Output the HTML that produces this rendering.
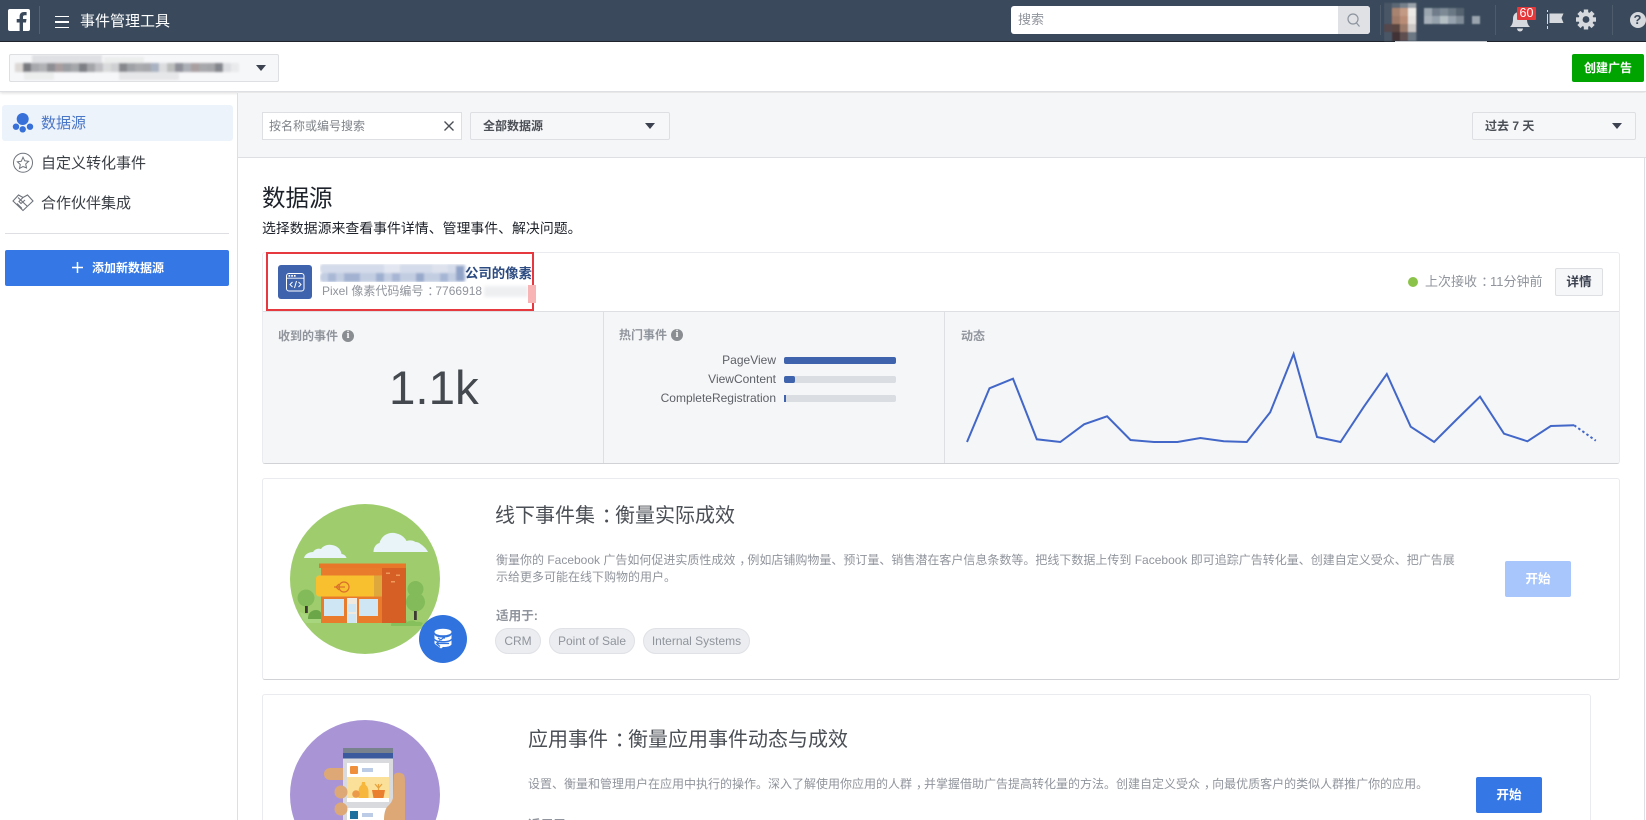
<!DOCTYPE html>
<html lang="zh"><head><meta charset="utf-8"><title>事件管理工具</title>
<style>
html,body{margin:0;padding:0;width:1646px;height:820px;overflow:hidden;background:#fff}
body{font-family:"Liberation Sans","Noto Sans CJK SC",sans-serif;color:#1d2129;font-size:12.6px}
#p{position:absolute;left:0;top:0;width:1646px;height:820px;overflow:hidden;background:#fff;filter:blur(.3px)}
.a{position:absolute;box-sizing:border-box}
.t{position:absolute;white-space:nowrap;line-height:18px;margin-top:-9px}
.dd{background:#f6f7f9;border:1px solid #dddfe2;border-radius:2px}
.car{position:absolute;width:0;height:0;border-left:5.500px solid transparent;border-right:5.500px solid transparent;border-top:6px solid #3c4250}
.pill{position:absolute;top:628px;height:26px;line-height:24px;border:1px solid #dfe1e6;background:#ebedf0;border-radius:13px;color:#90949c;font-size:12px;text-align:center;box-sizing:border-box}
.g{color:#90949c}
.b{font-weight:bold}
.c{position:relative;left:.33em}
.i{position:absolute;width:12px;height:12px;border-radius:50%;background:#8a8d91;color:#fff;font:bold 10px/12px "Liberation Serif",serif;text-align:center}
</style></head><body><div id="p">

<!-- top bar -->
<div class="a" style="left:0;top:0;width:1646px;height:42px;background:#3a4a5c;border-bottom:1px solid #20262e"></div>
<div class="a" style="left:8px;top:9px;width:22px;height:22px;background:#fff;border-radius:2px"></div>
<svg class="a" style="left:8px;top:9px" width="22" height="22"><path d="M15 22V13.500h3l.5-3.500H15V8c0-1.100.4-1.800 1.900-1.800h1.700V3.100C18.200 3 17.200 3 16 3c-2.600 0-4.400 1.600-4.400 4.500V10H8.700v3.500h2.900V22z" fill="#3a4a5c"/></svg>
<div class="a" style="left:39px;top:6px;width:1px;height:28px;background:#55626f"></div>
<div class="a" style="left:55px;top:16px;width:14px;height:12px;border-top:1.200px solid #fff;border-bottom:1.200px solid #fff"></div>
<div class="a" style="left:55px;top:21.400px;width:14px;height:1.200px;background:#fff"></div>
<div class="t" style="left:80px;top:22px;font-size:15px;color:#fff">事件管理工具</div>

<div class="a" style="left:1011px;top:6px;width:359px;height:28px;background:#fff;border-radius:3px;overflow:hidden">
  <div class="a" style="right:0;top:0;width:32px;height:28px;background:#dfe1e5"></div>
</div>
<div class="t" style="left:1018px;top:20px;font-size:13px;color:#90949c">搜索</div>
<svg class="a" style="left:1346px;top:12px" width="16" height="16" fill="none" stroke="#8d949e" stroke-width="1.200"><circle cx="7" cy="7" r="5"/><path d="M10.500 11l3 3.500"/></svg>
<div class="a" style="left:1380px;top:5px;width:1px;height:30px;background:#4d5b6a"></div>

<!-- avatar + blurred name -->
<svg class="a" style="left:1384px;top:0" width="115" height="48">
  <defs><filter id="b1" x="-5%" y="-5%" width="110%" height="110%"><feGaussianBlur stdDeviation=".9"/></filter></defs>
  <g filter="url(#b1)">
    <rect x="0" y="3" width="33" height="38" fill="#4a5766"/>
    <rect x="8" y="3" width="8" height="5" fill="#5c6875"/><rect x="16" y="3" width="8" height="5" fill="#76808b"/><rect x="24" y="3" width="8" height="5" fill="#9aa2aa"/>
    <rect x="8" y="8" width="8" height="8" fill="#a7836f"/><rect x="16" y="8" width="8" height="8" fill="#c39a83"/><rect x="24" y="8" width="8" height="8" fill="#ece9e6"/>
    <rect x="8" y="16" width="8" height="8" fill="#a07a68"/><rect x="16" y="16" width="8" height="8" fill="#b98c76"/><rect x="24" y="16" width="8" height="8" fill="#e6e2df"/>
    <rect x="0" y="24" width="8" height="8" fill="#54474c"/><rect x="8" y="24" width="8" height="8" fill="#5a4540"/><rect x="16" y="24" width="8" height="8" fill="#9c7a6a"/><rect x="24" y="24" width="8" height="8" fill="#ccc8c6"/>
    <rect x="8" y="32" width="8" height="9" fill="#3f3134"/><rect x="16" y="32" width="8" height="9" fill="#5e5051"/><rect x="24" y="32" width="8" height="9" fill="#6c7884"/>
    <rect x="40" y="8" width="8" height="8" fill="#9aa5af"/><rect x="48" y="8" width="8" height="8" fill="#6f7c89"/><rect x="56" y="8" width="8" height="8" fill="#7d8a96"/><rect x="64" y="8" width="8" height="8" fill="#6a7885"/><rect x="72" y="8" width="8" height="8" fill="#54626f"/>
    <rect x="40" y="16" width="8" height="8" fill="#a7b0b9"/><rect x="48" y="16" width="8" height="8" fill="#95a1ac"/><rect x="56" y="16" width="8" height="8" fill="#b4bfc4"/><rect x="64" y="16" width="8" height="8" fill="#96a2ad"/><rect x="72" y="16" width="8" height="8" fill="#7f8b96"/>
    <rect x="88" y="16" width="8" height="8" fill="#9aa4ae"/>
  </g>
</svg>
<svg class="a" style="left:1395px;top:41px" width="93" height="6"><path d="M0 0H92V1.500L90 1H50C40 5.500 22 5.500 10 1H0z" fill="#c9cdd1"/></svg>

<div class="a" style="left:1495px;top:5px;width:1px;height:30px;background:#4d5b6a"></div>
<svg class="a" style="left:1509px;top:8px" width="24" height="24"><path d="M11 2a2 2 0 0 1 2 2c4 1 5 4 5 7 0 4 1 6 3 8H1c2-2 3-4 3-8 0-3 1-6 5-7a2 2 0 0 1 2-2z" fill="#d6d9dd"/><path d="M8 20.500h6a3 3 0 0 1-6 0z" fill="#d6d9dd"/></svg>
<div class="a" style="left:1517px;top:7px;width:19px;height:13px;background:#e5383b;color:#fff;font-size:12.500px;line-height:13px;text-align:center;border-radius:1px">60</div>
<svg class="a" style="left:1545px;top:9px" width="20" height="22"><path d="M2.500 1v2M2.500 5v10M2.500 17v3" stroke="#d6d9dd" stroke-width="1"/><path d="M4.500 4.500h14l-2 4.500 2 5h-14z" fill="#d6d9dd"/></svg>
<svg class="a" style="left:1575px;top:9px" width="22" height="22"><g transform="translate(11 10.500)" fill="#d6d9dd"><circle r="7.500"/><rect x="-2.200" y="-10" width="4.400" height="20"/><rect x="-2.200" y="-10" width="4.400" height="20" transform="rotate(45)"/><rect x="-2.200" y="-10" width="4.400" height="20" transform="rotate(90)"/><rect x="-2.200" y="-10" width="4.400" height="20" transform="rotate(135)"/><circle r="3.400" fill="#3a4a5c"/></g></svg>
<div class="a" style="left:1612px;top:5px;width:1px;height:30px;background:#4d5b6a"></div>
<div class="a" style="left:1629.500px;top:12px;width:16px;height:16px;border-radius:50%;background:#d6d9dd;color:#3a4a5c;font:bold 13px/16px 'Liberation Sans',sans-serif;text-align:center">?</div>

<!-- sub header -->
<div class="a" style="left:0;top:42px;width:1646px;height:50px;background:#fff;border-bottom:1px solid #dddfe2;box-shadow:0 1px 3px rgba(0,0,0,.15)"></div>
<div class="a dd" style="left:9px;top:54px;width:270px;height:28px"></div>
<svg class="a" style="left:9px;top:54px" width="250" height="28"><defs><filter id="b3" x="-2%" y="-10%" width="104%" height="120%"><feGaussianBlur stdDeviation="1"/></filter></defs>
 <g filter="url(#b3)">
  <rect x="23" y="1" width="70" height="8" fill="#dfe0e3"/><rect x="95" y="3" width="40" height="6" fill="#eceded"/>
  <rect x="15" y="18" width="30" height="8" fill="#eceded"/><rect x="110" y="18" width="60" height="8" fill="#e6e7e9"/>
  <rect x="6" y="9" width="8" height="9" fill="#dcd8d5"/><rect x="14" y="9" width="8" height="9" fill="#77797f"/><rect x="22" y="9" width="8" height="9" fill="#a7a9ad"/><rect x="30" y="9" width="8" height="9" fill="#b0b2b5"/><rect x="38" y="9" width="8" height="9" fill="#8c8e93"/><rect x="46" y="9" width="8" height="9" fill="#a89ea0"/><rect x="54" y="9" width="8" height="9" fill="#9a9da1"/><rect x="62" y="9" width="8" height="9" fill="#a5a7ab"/><rect x="70" y="9" width="8" height="9" fill="#7d7f85"/><rect x="78" y="9" width="8" height="9" fill="#a3a5a9"/><rect x="86" y="9" width="8" height="9" fill="#bfc0c3"/><rect x="94" y="9" width="8" height="9" fill="#dadbdc"/><rect x="102" y="9" width="8" height="9" fill="#cfd0d2"/><rect x="110" y="9" width="8" height="9" fill="#85878d"/><rect x="118" y="9" width="8" height="9" fill="#9fa1a6"/><rect x="126" y="9" width="8" height="9" fill="#a9abaf"/><rect x="134" y="9" width="8" height="9" fill="#a5a7ac"/><rect x="142" y="9" width="8" height="9" fill="#a9b2c2"/><rect x="150" y="9" width="8" height="9" fill="#dcdddf"/><rect x="158" y="9" width="8" height="9" fill="#bcbdbd"/><rect x="166" y="9" width="8" height="9" fill="#8e8f99"/><rect x="174" y="9" width="8" height="9" fill="#acafb5"/><rect x="182" y="9" width="8" height="9" fill="#a99fa1"/><rect x="190" y="9" width="8" height="9" fill="#a7a8ac"/><rect x="198" y="9" width="8" height="9" fill="#a4a5a9"/><rect x="206" y="9" width="8" height="9" fill="#84868d"/><rect x="214" y="9" width="8" height="9" fill="#dddee1"/><rect x="222" y="9" width="8" height="9" fill="#e9eaec"/>
 </g></svg>
<div class="car" style="left:256px;top:65px"></div>
<div class="a" style="left:1572px;top:54px;width:72px;height:28px;background:#00a400;border-radius:2px;color:#fff;font-size:12px;font-weight:bold;line-height:28px;text-align:center">创建广告</div>

<!-- sidebar -->
<div class="a" style="left:237px;top:93px;width:1px;height:727px;background:#dddfe2"></div>
<div class="a" style="left:2px;top:105px;width:231px;height:36px;background:#edf3fb;border-radius:3px"></div>
<svg class="a" style="left:12px;top:111px" width="22" height="24" fill="#3670d8"><circle cx="10.700" cy="8" r="6"/><circle cx="4" cy="15.700" r="3.200"/><circle cx="10.700" cy="18.300" r="3.200"/><circle cx="18" cy="15.700" r="3.200"/></svg>
<div class="t" style="left:41px;top:123.500px;font-size:15px;color:#4a76c7">数据源</div>
<svg class="a" style="left:12px;top:152px" width="22" height="22" fill="none" stroke="#6f747c" stroke-width="1"><circle cx="11" cy="10.700" r="9.500"/><path d="M11 5.200l1.700 3.600 3.900.5-2.900 2.700.8 3.900L11 14.500l-3.500 1.900.8-3.900-2.900-2.700 3.900-.5z"/></svg>
<div class="t" style="left:41px;top:164px;font-size:15px;color:#3a3e45">自定义转化事件</div>
<svg class="a" style="left:12px;top:193px" width="22" height="20" fill="none" stroke="#6f747c" stroke-width="1.100"><path d="M1 8l5.500-6 4.500 2.500L15.500 2 21 8l-10 9.500z"/><path d="M6 4.500l9.500 9M11 4.500L7 8.500l2 2 4-3.500M5 10.500l5 5"/></svg>
<div class="t" style="left:41px;top:203.500px;font-size:15px;color:#3a3e45">合作伙伴集成</div>
<div class="a" style="left:5px;top:233px;width:224px;height:1px;background:#dddfe2"></div>
<div class="a" style="left:5px;top:250px;width:224px;height:36px;background:#3578e5;border-radius:2px"></div>
<svg class="a" style="left:71px;top:261px" width="13" height="13"><path d="M6.500 1v11M1 6.500h11" stroke="#fff" stroke-width="1.500"/></svg>
<div class="t" style="left:92px;top:268px;font-size:12px;font-weight:bold;color:#fff">添加新数据源</div>

<!-- filter bar -->
<div class="a" style="left:238px;top:93px;width:1408px;height:65px;background:#f5f6f7;border-bottom:1px solid #dddfe2"></div>
<div class="a" style="left:262px;top:112px;width:200px;height:28px;background:#fff;border:1px solid #dddfe2"></div>
<div class="t" style="left:269px;top:126px;font-size:12px;color:#7f8389">按名称或编号搜索</div>
<svg class="a" style="left:443px;top:120px" width="12" height="12"><path d="M1.500 1.500l9 9M10.500 1.500l-9 9" stroke="#4b4f56" stroke-width="1.400"/></svg>
<div class="a dd" style="left:470px;top:112px;width:200px;height:28px"></div>
<div class="t b" style="left:483px;top:126px;font-size:12px;color:#4b4f56">全部数据源</div>
<div class="car" style="left:645px;top:122.500px"></div>
<div class="a dd" style="left:1472px;top:112px;width:164px;height:28px"></div>
<div class="t b" style="left:1485px;top:126px;font-size:12px;color:#4b4f56">过去 7 天</div>
<div class="car" style="left:1611.500px;top:123px"></div>

<div class="a" style="left:1644px;top:158px;width:1px;height:662px;background:#dddfe2"></div>

<!-- heading -->
<div class="t" style="left:262px;top:197.500px;font-size:23.500px;line-height:30px;margin-top:-15px;color:#1d2129">数据源</div>
<div class="t" style="left:262px;top:228px;font-size:13.900px;color:#1d2129">选择数据源来查看事件详情、管理事件、解决问题。</div>

<!-- pixel card -->
<div class="a" style="left:262px;top:252px;width:1358px;height:212px;background:#fff;border:1px solid #e9ebee;border-bottom:1px solid #d0d2d6;border-radius:3px;overflow:hidden">
  <div class="a" style="left:0;top:58px;width:1356px;height:152px;background:#f5f6f7;border-top:1px solid #dddfe2"></div>
</div>
<div class="a" style="left:603px;top:311px;width:1px;height:152px;background:#dddfe2"></div>
<div class="a" style="left:944px;top:311px;width:1px;height:152px;background:#dddfe2"></div>

<div class="a" style="left:278px;top:265px;width:34px;height:34px;background:#3f63ad;border-radius:3px"></div>
<svg class="a" style="left:285px;top:272px" width="21" height="21" fill="none" stroke="#fff"><rect x="1.500" y="1.500" width="17.500" height="17.500" rx="2.500" stroke-width="1"/><path d="M2 6.200h17" stroke-width=".8"/><g fill="#fff" stroke="none"><rect x="3.500" y="3" width="1.700" height="1.700"/><rect x="6.200" y="3" width="1.700" height="1.700"/><rect x="8.900" y="3" width="1.700" height="1.700"/></g><path d="M7.500 10L5 12.500 7.500 15M13.500 10l2.500 2.500-2.500 2.500M11.500 9l-2 7" stroke-width="1"/></svg>

<svg class="a" style="left:320px;top:264px" width="148" height="18"><defs><filter id="b2" x="-3%" y="-15%" width="106%" height="130%"><feGaussianBlur stdDeviation="1"/></filter></defs><g filter="url(#b2)">
 <rect x="0" y="0" width="146" height="9" rx="3" fill="#d4dbea"/><rect x="0" y="9" width="146" height="9" rx="3" fill="#c2cde2"/>
 <rect x="8" y="9" width="8" height="9" fill="#a9b8d5"/><rect x="24" y="9" width="16" height="9" fill="#a3b2d1"/><rect x="56" y="9" width="8" height="9" fill="#9eafcf"/><rect x="72" y="9" width="8" height="9" fill="#a7b6d4"/><rect x="96" y="9" width="8" height="9" fill="#98a9cb"/><rect x="120" y="9" width="8" height="9" fill="#a5b5d4"/><rect x="136" y="2" width="8" height="15" fill="#90a3c7"/><rect x="64" y="0" width="16" height="9" fill="#e2e6f0"/><rect x="112" y="0" width="16" height="9" fill="#dde2ed"/></g></svg>
<div class="t b" style="left:465px;top:274px;font-size:13.400px;color:#2b4a80">公司的像素</div>
<div class="t g" style="left:322px;top:291px;font-size:12px">Pixel 像素代码编号<span class="c">：</span>7766918</div>
<div class="a" style="left:484px;top:286px;width:44px;height:11px;background:#eeeff1;filter:blur(1.500px)"></div>

<!-- red box -->
<div class="a" style="left:266px;top:251.500px;width:268px;height:59px;border:2.500px solid #e5383f"></div>
<div class="a" style="left:528px;top:285px;width:8px;height:18px;background:#f8b4b4"></div>

<div class="a" style="left:1408px;top:277px;width:10px;height:10px;border-radius:50%;background:#8bc34a"></div>
<div class="t g" style="left:1425px;top:282px;font-size:13px">上次接收<span class="c">：</span>11分钟前</div>
<div class="a dd" style="left:1555px;top:268px;width:48px;height:28px;color:#3c4250;font-size:12.600px;font-weight:bold;line-height:26px;text-align:center">详情</div>

<!-- stats -->
<div class="t b" style="left:278px;top:336px;font-size:12px;color:#90949c">收到的事件</div>
<div class="i" style="left:342px;top:330px">i</div>
<div class="t" style="left:389px;top:389px;font-size:47.500px;line-height:60px;margin-top:-30px;color:#444950">1.1k</div>

<div class="t b" style="left:619px;top:335px;font-size:12px;color:#90949c">热门事件</div>
<div class="i" style="left:671px;top:329px">i</div>
<div class="t" style="right:870px;top:360px;font-size:12px;color:#5d6067">PageView</div>
<div class="t" style="right:870px;top:379px;font-size:12px;color:#5d6067">ViewContent</div>
<div class="t" style="right:870px;top:398px;font-size:12px;color:#5d6067">CompleteRegistration</div>
<div class="a" style="left:784px;top:357px;width:112px;height:7px;background:#3f63ad;border-radius:2px"></div>
<div class="a" style="left:784px;top:376px;width:112px;height:7px;background:#dadde1;border-radius:2px"></div>
<div class="a" style="left:784px;top:376px;width:11px;height:7px;background:#3f63ad;border-radius:2px"></div>
<div class="a" style="left:784px;top:395px;width:112px;height:7px;background:#dadde1;border-radius:2px"></div>
<div class="a" style="left:784px;top:395px;width:2px;height:7px;background:#3f63ad"></div>

<div class="t b" style="left:961px;top:336px;font-size:12px;color:#90949c">动态</div>
<svg class="a" style="left:0;top:0;pointer-events:none" width="1646" height="820">
  <polyline fill="none" stroke="#4267c8" stroke-width="2" points="967,442 989.500,388.300 1013,378.700 1036.800,439.300 1060.300,442 1084.100,424.300 1107.100,416.300 1130.500,440 1154,442 1177.400,442 1200.400,438 1223.800,441.300 1246.800,442 1270.200,412.300 1293.600,354 1317,437 1340.500,442 1363.900,406.700 1386.800,374 1410.700,426.700 1434.100,442 1457.100,419 1480,396.700 1504,433.700 1527.400,441.300 1550.800,426 1574.200,425.300"/>
  <polyline fill="none" stroke="#4267c8" stroke-width="2" stroke-dasharray="2.500 2.500" points="1574.200,425.300 1595.800,440.700"/>
</svg>

<!-- offline card -->
<div class="a" style="left:262px;top:478px;width:1358px;height:202px;background:#fff;border:1px solid #e9ebee;border-bottom:1px solid #d0d2d6;border-radius:3px"></div>
<!-- app card -->
<div class="a" style="left:262px;top:694px;width:1329px;height:126px;border:1px solid #e9ebee;border-bottom:none;border-radius:3px 3px 0 0"></div>

<svg class="a" style="left:0;top:0" width="1646" height="820">
  <circle cx="365" cy="579" r="75" fill="#9fcd6e"/>
  <g fill="#e8f4f8">
    <path d="M304 558c1-4 5-6 9-6 2-3 5-4 8-3 2-3 6-5 11-4 6 1 9 5 9.500 9 2.500.3 4.500 2 5 4z"/>
    <path d="M373.500 552c0-4 2-8 6-9 2-7 8-11 15-10 6 1 10 4 12 8 3-1 6-1 9 1 2 0 4 1 5 2 3 2 6 5 7.500 8z"/>
  </g>
  <path d="M300 612c4 2 14 5 22 5v6h-16c-3-3-5-7-6-11z" fill="#a8d67e"/>
  <circle cx="306" cy="598" r="8.500" fill="#83bb5a"/><rect x="305" y="606" width="2.800" height="7" fill="#3c3a33"/>
  <path d="M308 618c0-5 4-8 8-8 4 0 6 3 6 7v2h-14z" fill="#6ba648"/>
  <circle cx="415.500" cy="589" r="8" fill="#83bb5a"/><circle cx="415.500" cy="602" r="9.500" fill="#83bb5a"/><rect x="414" y="611" width="2.800" height="9" fill="#3c3a33"/>
  <path d="M391 626c0-4 2-6 5-6 1-2 4-3 6-2 3 0 5 2 5 4 3-2 7-2 9 0 2-1 5 0 7 1l-2 3z" fill="#85c05c"/>
  <rect x="382" y="564" width="24" height="59" fill="#d55f25"/>
  <rect x="319" y="563.500" width="87" height="4.500" fill="#e9772a"/>
  <rect x="321" y="568" width="61" height="55" fill="#e87c2c"/>
  <path d="M319 575.500h63v21h-63a3 3 0 0 1-3-3v-15a3 3 0 0 1 3-3z" fill="#f8bf2f"/><rect x="374" y="575.500" width="8" height="21" fill="#dfa83c"/>
  <circle cx="344" cy="587" r="5" fill="none" stroke="#d8702a" stroke-width="1.200"/><path d="M334 587h11M339 584l-3 3 3 3" fill="none" stroke="#d8702a" stroke-width="1.200"/>
  <rect x="324" y="599" width="20" height="17" fill="#cfe7f5"/><rect x="359" y="599" width="19" height="17" fill="#cfe7f5"/>
  <rect x="347" y="598" width="10" height="25" fill="#f1e9de"/><rect x="348" y="604" width="8" height="8" fill="#cfe7f5"/><rect x="348" y="614" width="8" height="9" fill="#cfe7f5"/>
  <g fill="#f09a5a"><rect x="386" y="572.500" width="4" height="1.500"/><rect x="396" y="574.500" width="4" height="1.500"/><rect x="391" y="581" width="4" height="1.500"/></g>
  <circle cx="443" cy="639" r="24" fill="#3173de"/>
  <g fill="#fff"><ellipse cx="443" cy="632" rx="8.500" ry="3.300"/><path d="M434.500 634.500c1 2 3.500 3 8.500 3s7.500-1 8.500-3v4c-1 1.500-3.500 2.500-8.500 2.500s-7.500-1-8.500-2.500z"/><path d="M434.500 640.500c2 1.500 4.500 2 8.500 2s6.500-.5 8.500-2v4c-1 1.500-3.500 2.500-8.500 2.500l-2 1.500-4-3c-1-.8-2.500-1.500-2.500-2.500z"/></g>
  <path d="M449 643.500h-12M440 640.500l-3.500 3 3.500 3M438 638l3 2 2-2h2" fill="none" stroke="#3173de" stroke-width="1.200"/>

  <circle cx="365" cy="795" r="75" fill="#a995d6"/>
  <path d="M330 768h15v12h-15a6 6 0 0 1 0-12z" fill="#dda875"/>
  <rect x="343" y="748" width="50" height="72" fill="#d8dade"/>
  <rect x="343" y="748" width="50" height="5" fill="#78828f"/><rect x="343" y="753" width="50" height="5.500" fill="#3b5a9e"/>
  <rect x="347" y="763" width="42" height="39" fill="#fff"/>
  <rect x="350" y="766" width="8" height="8" rx="1" fill="#ef8f3c"/><rect x="362" y="768" width="11" height="4" fill="#bccbe6"/>
  <rect x="347" y="777" width="42" height="21" fill="#fbe09a"/>
  <path d="M362 782h3l.5 3c2 1 3 4 3 7v6h-10v-6c0-3 1-6 3-7z" fill="#f6b73c"/>
  <circle cx="356" cy="794" r="3.800" fill="#ea9a4a"/>
  <path d="M372 790h13l-1.500 8h-10z" fill="#ea7f30"/><path d="M378.500 790v-6M375 784l3.500 4 3.500-4" stroke="#e8a23c" stroke-width="1.300" fill="none"/>
  <rect x="347" y="808" width="42" height="12" fill="#fff"/>
  <rect x="350" y="811" width="8" height="8" fill="#1f6f9e"/><rect x="362" y="813" width="11" height="4" fill="#bccbe6"/>
  <circle cx="341" cy="792" r="6.500" fill="#dda875"/><circle cx="341" cy="809" r="6.500" fill="#dda875"/>
  <path d="M394 775c1-3 8-3 10 0 1 2 1 6 1 12v33h-21c0-6 1-10 3-13 3-3 5-5 6-9z" fill="#dda875"/>
</svg>

<div class="t" style="left:495px;top:516px;font-size:20px;line-height:28px;margin-top:-14px;color:#4b4f56">线下事件集<span class="c">：</span>衡量实际成效</div>
<div class="t g" style="left:496px;top:560px;font-size:12px">衡量你的 Facebook 广告如何促进实质性成效<span class="c">，</span>例如店铺购物量、预订量、销售潜在客户信息条数等。把线下数据上传到 Facebook 即可追踪广告转化量、创建自定义受众、把广告展</div>
<div class="t g" style="left:496px;top:577px;font-size:12px">示给更多可能在线下购物的用户。</div>
<div class="t b" style="left:496px;top:616px;font-size:12.600px;color:#90949c">适用于:</div>
<div class="pill" style="left:495px;width:46px">CRM</div>
<div class="pill" style="left:549px;width:86px">Point of Sale</div>
<div class="pill" style="left:643px;width:107px">Internal Systems</div>
<div class="a" style="left:1505px;top:561px;width:66px;height:36px;background:#a8c6fb;border-radius:2px;color:#fff;font-size:12.600px;font-weight:bold;line-height:36px;text-align:center">开始</div>

<div class="t" style="left:528px;top:740px;font-size:20px;line-height:28px;margin-top:-14px;color:#4b4f56">应用事件<span class="c">：</span>衡量应用事件动态与成效</div>
<div class="t g" style="left:528px;top:784px;font-size:12px">设置、衡量和管理用户在应用中执行的操作。深入了解使用你应用的人群<span class="c">，</span>并掌握借助广告提高转化量的方法。创建自定义受众<span class="c">，</span>向最优质客户的类似人群推广你的应用。</div>
<div class="a b" style="left:528px;top:816px;height:4px;width:60px;overflow:hidden;white-space:nowrap;line-height:18px;font-size:12.600px;color:#90949c">适用于</div>
<div class="a" style="left:1476px;top:777px;width:66px;height:36px;background:#3578e5;border-radius:2px;color:#fff;font-size:12.600px;font-weight:bold;line-height:36px;text-align:center">开始</div>

</div></body></html>
